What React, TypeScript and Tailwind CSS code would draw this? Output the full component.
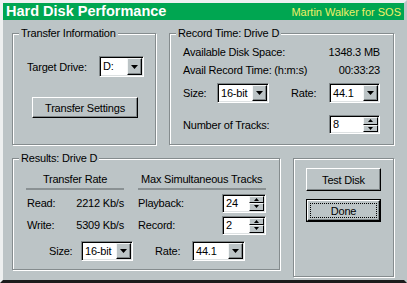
import React from "react";

function Arrow({ up = false }: { up?: boolean }) {
  return (
    <svg width="7" height="4" viewBox="0 0 7 4" className="block">
      <polygon points={up ? "3.5,0 7,4 0,4" : "0,0 7,0 3.5,4"} fill="#000" />
    </svg>
  );
}

function SmallArrow({ up = false }: { up?: boolean }) {
  return (
    <svg width="5" height="3" viewBox="0 0 5 3" className="block">
      <polygon points={up ? "2.5,0 5,3 0,3" : "0,0 5,0 2.5,3"} fill="#000" />
    </svg>
  );
}

function GroupBox({
  label,
  className = "",
  children,
}: {
  label?: string;
  className?: string;
  children?: React.ReactNode;
}) {
  return (
    <div
      className={`relative border border-[#858c8e] shadow-[inset_1px_1px_0_#fff,1px_1px_0_#fff] ${className}`}
    >
      {label && (
        <span className="absolute -top-[8px] left-[6px] bg-[#bcc4c6] px-[2px] leading-[14px] whitespace-nowrap">
          {label}
        </span>
      )}
      {children}
    </div>
  );
}

function Combo({ value, className = "" }: { value: string; className?: string }) {
  return (
    <div
      className={`flex h-[20px] bg-white border border-t-[#7f8688] border-l-[#7f8688] border-r-white border-b-white shadow-[inset_1px_1px_0_#000,inset_-1px_-1px_0_#dde1e2] p-[1px] ${className}`}
    >
      <span className="flex-1 pl-[2px] leading-[16px]">{value}</span>
      <span className="w-[15px] flex items-center justify-center bg-[#bcc4c6] border border-t-[#f4f6f6] border-l-[#f4f6f6] border-r-black border-b-black shadow-[inset_-1px_-1px_0_#7f8688]">
        <Arrow />
      </span>
    </div>
  );
}

function Spinner({ value, className = "" }: { value: string; className?: string }) {
  return (
    <div
      className={`flex h-[19px] bg-white border border-t-[#7f8688] border-l-[#7f8688] border-r-white border-b-white shadow-[inset_1px_1px_0_#000,inset_-1px_-1px_0_#dde1e2] p-[1px] ${className}`}
    >
      <span className="flex-1 pl-[2px] leading-[15px]">{value}</span>
      <span className="w-[15px] flex flex-col">
        <span className="flex-1 flex items-center justify-center bg-[#bcc4c6] border border-t-[#f4f6f6] border-l-[#f4f6f6] border-r-black border-b-black">
          <SmallArrow up />
        </span>
        <span className="flex-1 flex items-center justify-center bg-[#bcc4c6] border border-t-[#f4f6f6] border-l-[#f4f6f6] border-r-black border-b-black">
          <SmallArrow />
        </span>
      </span>
    </div>
  );
}

function Button({
  label,
  className = "",
  focused = false,
}: {
  label: string;
  className?: string;
  focused?: boolean;
}) {
  if (focused) {
    return (
      <div className={`border border-black ${className}`}>
        <div className="h-full border border-t-white border-l-white border-r-black border-b-black shadow-[inset_-1px_-1px_0_#7f8688] p-[2px]">
          <div className="h-full flex items-center justify-center border border-dotted border-black">
            {label}
          </div>
        </div>
      </div>
    );
  }
  return (
    <div
      className={`flex items-center justify-center border border-t-white border-l-white border-r-black border-b-black shadow-[inset_-1px_-1px_0_#7f8688] ${className}`}
    >
      {label}
    </div>
  );
}

export default function App(): React.JSX.Element {
  return (
    <div className="w-[407px] h-[283px] bg-[#bcc4c6] border-[3px] border-t-[#eef0f0] border-l-[#eef0f0] border-r-[#bcc4c6] border-b-[#1c1c1c] font-['Liberation_Sans',Arial,sans-serif] text-[11px] tracking-[-0.2px] text-black leading-[14px] overflow-hidden whitespace-nowrap">
      {/* Title bar */}
      <div className="h-[17px] bg-[#00a651] flex items-center justify-between pl-[3px] pr-[3px]">
        <span className="text-white font-bold text-[14.5px] tracking-normal leading-[17px]">Hard Disk Performance</span>
        <span className="text-[#eef066] text-[11px] tracking-normal">Martin Walker for SOS</span>
      </div>

      {/* Top row */}
      <div className="flex gap-[13px] pl-[9px] pt-[13px]">
        <GroupBox label="Transfer Information" className="w-[144px] h-[112px] pt-[22px] pl-[14px]">
          <div className="flex items-center">
            <span className="w-[72px]">Target Drive:</span>
            <Combo value="D:" className="w-[45px] h-[21px]" />
          </div>
          <Button label="Transfer Settings" className="ml-[5px] mt-[20px] w-[106px] h-[21px]" />
        </GroupBox>

        <GroupBox label="Record Time: Drive D" className="w-[225px] h-[112px] pt-[11px] pl-[13px] pr-[13px]">
          <div className="flex justify-between h-[14px]">
            <span>Available Disk Space:</span>
            <span>1348.3 MB</span>
          </div>
          <div className="flex justify-between h-[14px] mt-[4px]">
            <span>Avail Record Time: (h:m:s)</span>
            <span>00:33:23</span>
          </div>
          <div className="flex items-center mt-[6px]">
            <span className="w-[34px]">Size:</span>
            <Combo value="16-bit" className="w-[52px]" />
            <span className="ml-[22px] w-[38px]">Rate:</span>
            <Combo value="44.1" className="w-[51px]" />
          </div>
          <div className="flex items-center mt-[12px]">
            <span className="w-[146px]">Number of Tracks:</span>
            <Spinner value="8" className="w-[51px] h-[18px]" />
          </div>
        </GroupBox>
      </div>

      {/* Bottom row */}
      <div className="flex gap-[13px] pl-[9px] pt-[13px] items-start">
        <GroupBox label="Results: Drive D" className="w-[268px] h-[112px] pt-[13px] pl-[13px]">
          <div className="flex gap-[14px]">
            <div className="w-[98px]">
              <div className="text-center">Transfer Rate</div>
              <div className="mt-[2px] h-[2px] bg-[#8a9193]" />
              <div className="flex items-center justify-between h-[20px] mt-[3px]">
                <span className="pl-[1px]">Read:</span>
                <span>2212 Kb/s</span>
              </div>
              <div className="flex items-center justify-between h-[20px] mt-[2px]">
                <span className="pl-[1px]">Write:</span>
                <span>5309 Kb/s</span>
              </div>
            </div>
            <div className="w-[128px]">
              <div className="pl-[3px]">Max Simultaneous Tracks</div>
              <div className="mt-[2px] h-[2px] bg-[#8a9193]" />
              <div className="flex items-center justify-between h-[20px] mt-[3px]">
                <span>Playback:</span>
                <Spinner value="24" className="w-[44px]" />
              </div>
              <div className="flex items-center justify-between h-[20px] mt-[2px]">
                <span>Record:</span>
                <Spinner value="2" className="w-[44px]" />
              </div>
            </div>
          </div>
          <div className="flex items-center mt-[6px] ml-[23px]">
            <span className="w-[32px]">Size:</span>
            <Combo value="16-bit" className="w-[52px]" />
            <span className="ml-[22px] w-[37px]">Rate:</span>
            <Combo value="44.1" className="w-[53px]" />
          </div>
        </GroupBox>

        <GroupBox className="w-[101px] h-[119px] pt-[9px] pl-[12px]">
          <Button label="Test Disk" className="w-[75px] h-[23px]" />
          <Button label="Done" focused className="w-[75px] h-[23px] mt-[8px]" />
        </GroupBox>
      </div>
    </div>
  );
}
